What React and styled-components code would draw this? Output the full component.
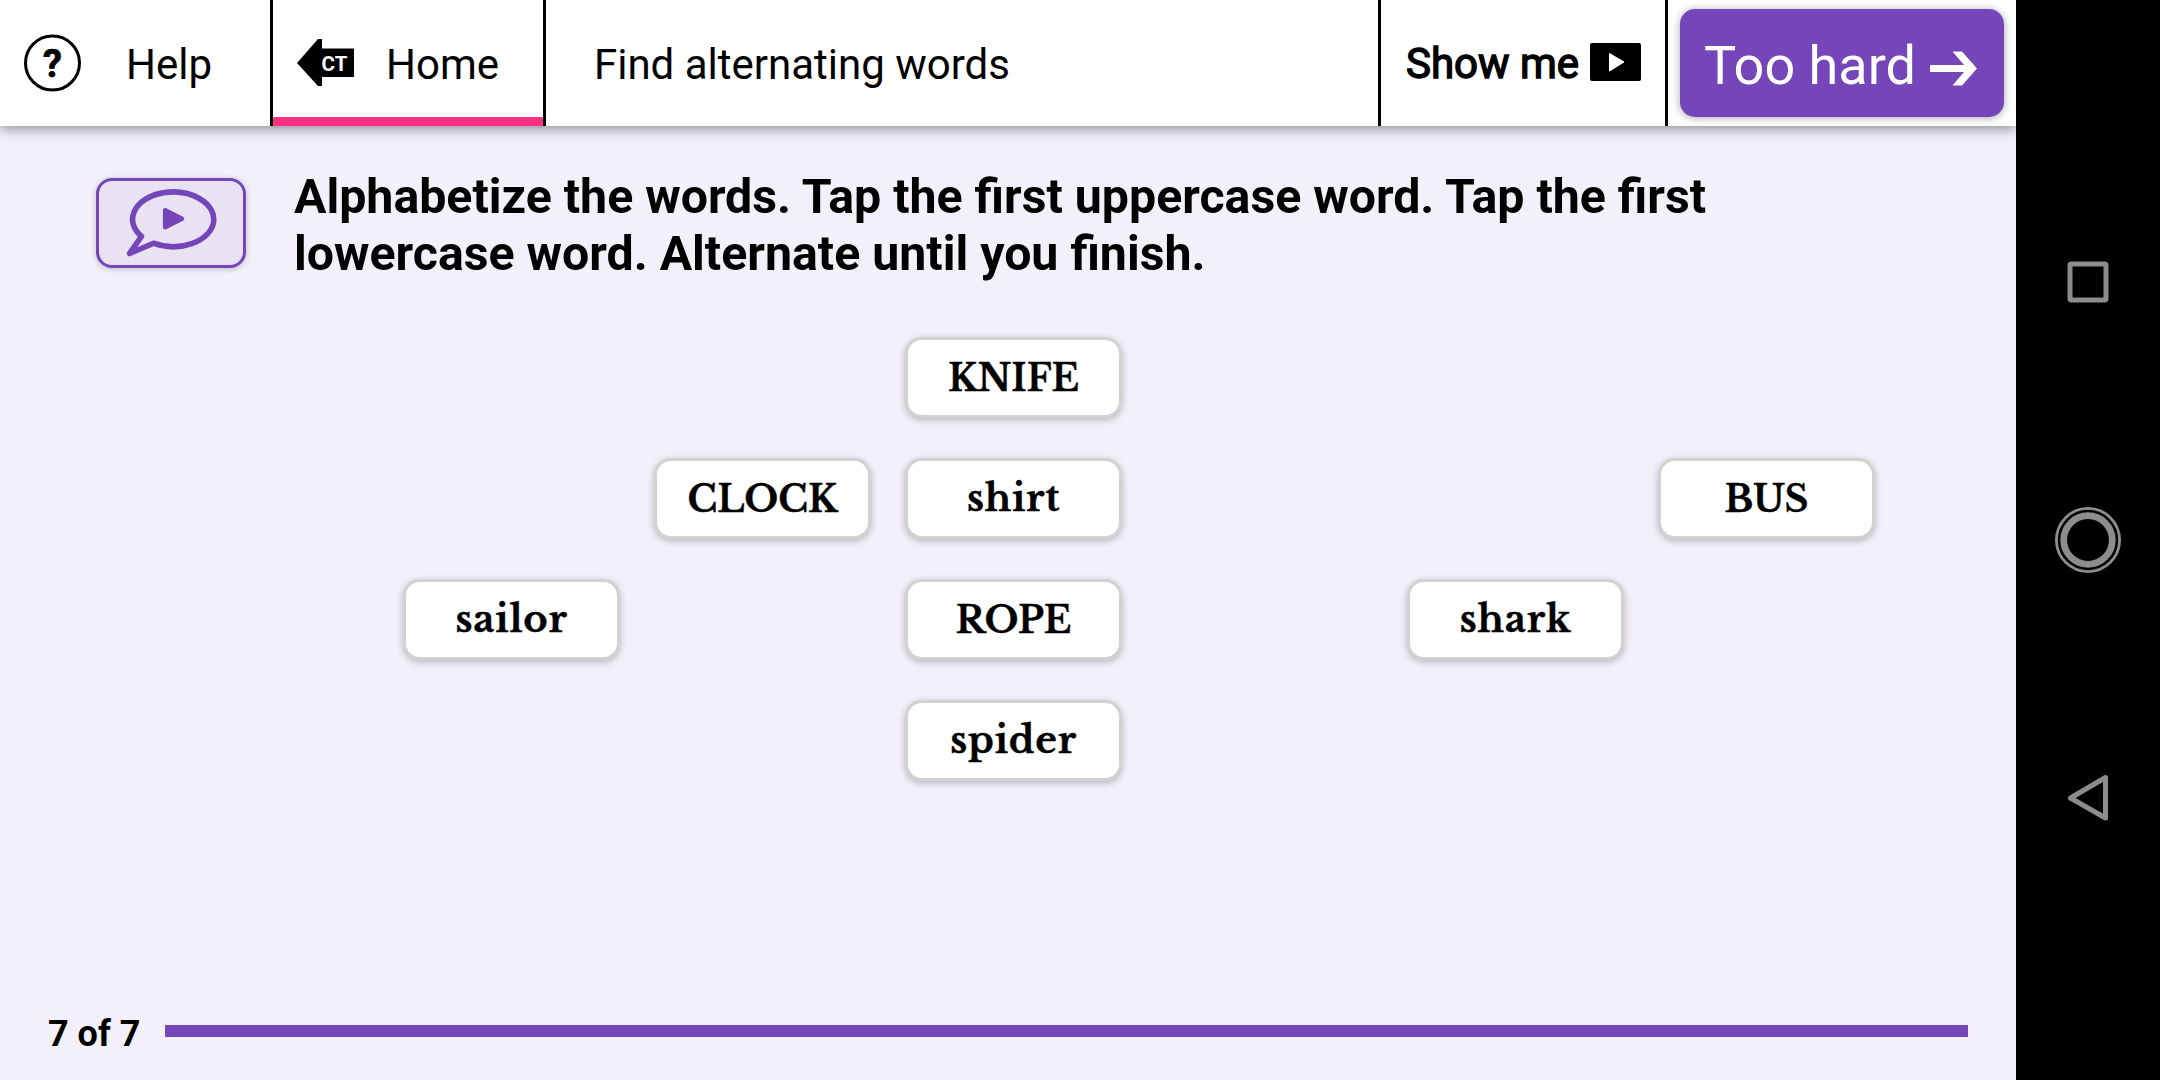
import React from 'react';
import styled, { createGlobalStyle } from 'styled-components';

const PURPLE = '#7446b9';

const GlobalStyle = createGlobalStyle`
  * { box-sizing: border-box; }
  body { margin: 0; background: #000; }
  button { margin: 0; padding: 0; border: 0; background: none; font: inherit; color: inherit; }
`;

const Screen = styled.div`
  display: flex;
  width: 2160px;
  height: 1080px;
  overflow: hidden;
  background: #000;
  color: #000;
  font-family: Roboto, "Liberation Sans", sans-serif;
`;

const AppArea = styled.div`
  display: flex;
  flex-direction: column;
  width: 2016px;
  background: #f3f0fa;
  overflow: hidden;
`;

const Header = styled.header`
  display: flex;
  flex: none;
  height: 126px;
  background: #fff;
  box-shadow: 0 3px 12px rgba(0, 0, 0, 0.42);
`;

const Tab = styled.button`
  display: flex;
  align-items: center;
  width: ${(p) => p.$width}px;
  gap: ${(p) => p.$gap}px;
  padding: 0 0 0 24px;
  border-right: 3px solid #000;
  font-size: 42px;
  line-height: 50px;
  box-shadow: ${(p) => (p.$active ? 'inset 0 -9px #ff3083' : 'none')};
  span { padding-top: 3px; }
`;

const Title = styled.h1`
  display: flex;
  align-items: center;
  flex: 1;
  margin: 0;
  padding: 2px 0 0 48px;
  font-size: 42px;
  font-weight: 400;
`;

const ShowMe = styled.button`
  display: flex;
  align-items: center;
  gap: 11px;
  width: 290px;
  padding: 0 0 2px 25px;
  border: solid #000;
  border-width: 0 3px;
  font-size: 42px;
  -webkit-text-stroke: 1.4px #000;
  span { padding-top: 3px; }
`;

const TooHard = styled.button`
  display: flex;
  align-items: center;
  gap: 14px;
  width: 324px;
  height: 108px;
  margin: 9px 12px;
  padding: 4px 0 0 24px;
  border-radius: 15px;
  background: ${PURPLE};
  box-shadow: 0 1px 8px rgba(0, 0, 0, 0.35);
  color: #fff;
  font-size: 54px;
`;

const Icon = styled.svg`
  display: block;
  flex: none;
  overflow: visible;
`;

const Lesson = styled.main`
  display: flex;
  flex-direction: column;
  flex: 1;
`;

const Instruction = styled.section`
  display: flex;
  align-items: flex-start;
  height: 211px;
  padding: 42px 0 0 96px;
`;

const SpeakButton = styled.button`
  display: flex;
  width: 150px;
  height: 90px;
  margin: 10px 48px 0 0;
  border: 3px solid ${PURPLE};
  border-radius: 16px;
  background: #e9e2f3;
  box-shadow: 0 1px 6px rgba(0, 0, 0, 0.22);
`;

const Prompt = styled.p`
  margin: 0;
  width: 1500px;
  font-size: 48.27px;
  font-weight: 700;
  line-height: 57px;
`;

const Board = styled.div`
  display: grid;
  grid-template-columns: repeat(6, 217px);
  grid-auto-rows: 81px;
  column-gap: 34px;
  row-gap: 40px;
  padding-left: 403px;
`;

const WordCard = styled.button`
  display: flex;
  align-items: center;
  justify-content: center;
  grid-column: ${(p) => p.$col};
  grid-row: ${(p) => p.$row};
  padding-top: ${(p) => (p.$upper ? 1 : 0)}px;
  padding-bottom: ${(p) => (p.$upper ? 0 : 1)}px;
  border: 3px solid #d2d2d2;
  border-radius: 17px;
  background: #fff;
  box-shadow: 0 2px 7px rgba(0, 0, 0, 0.26);
  font-family: "Libre Baskerville", "Liberation Serif", serif;
  font-size: ${(p) => (p.$upper ? 36 : 37)}px;
  font-weight: 700;
  letter-spacing: ${(p) => (p.$upper ? 0 : 0.8)}px;
  -webkit-text-stroke: 0.4px #000;
`;

const Footer = styled.footer`
  display: flex;
  align-items: center;
  gap: 25px;
  margin-top: auto;
  height: 98px;
  padding: 0 48px;
  font-size: 36px;
  font-weight: 700;
`;

const Count = styled.span`
  width: 92px;
  padding-top: 6px;
  white-space: nowrap;
`;

const Progress = styled.div`
  flex: 1;
  height: 12px;
  background: ${PURPLE};
`;

const SystemNav = styled.nav`
  display: flex;
  flex-direction: column;
  align-items: center;
  justify-content: space-between;
  width: 144px;
  padding: 249px 0;
`;

const words = [
  ['KNIFE', 3, 1],
  ['CLOCK', 2, 2],
  ['shirt', 3, 2],
  ['BUS', 6, 2],
  ['sailor', 1, 3],
  ['ROPE', 3, 3],
  ['shark', 5, 3],
  ['spider', 3, 4],
];

export default function App() {
  return (
    <Screen>
      <GlobalStyle />
      <AppArea>
        <Header>
          <Tab $width={273} $gap={45}>
            <Icon width="57" height="57" viewBox="0 0 57 57">
              <circle cx="28.5" cy="28" r="27" fill="none" stroke="#000" strokeWidth="3" />
              <text x="28.5" y="41.5" textAnchor="middle" fontSize="38" fontWeight="700" stroke="#000" strokeWidth="0.7">?</text>
            </Icon>
            <span>Help</span>
          </Tab>
          <Tab $width={273} $gap={32} $active>
            <Icon width="57" height="48" viewBox="0 0 57 48">
              <path d="M0 24 21 0H25V9.5H57V38H25V47H21Z" />
              <text x="24.5" y="31.5" fontSize="20.5" fontWeight="700" fill="#fff" textLength="26">CT</text>
            </Icon>
            <span>Home</span>
          </Tab>
          <Title>Find alternating words</Title>
          <ShowMe>
            <span>Show me</span>
            <Icon width="51" height="38" viewBox="0 0 51 38">
              <rect width="51" height="38" rx="2" />
              <path d="M19.5 10.5V28L34 19Z" fill="#fff" stroke="#fff" strokeWidth="1" strokeLinejoin="round" />
            </Icon>
          </ShowMe>
          <TooHard>
            Too hard
            <Icon width="47" height="34" viewBox="0 0 47 34">
              <path d="M0 13.5H34L22.5 0H32L47 17 32 34H22.5L34 20.5H0Z" fill="#fff" transform="translate(0 3.5)" />
            </Icon>
          </TooHard>
        </Header>
        <Lesson>
          <Instruction>
            <SpeakButton>
              <Icon width="144" height="84" viewBox="99 181 144 84">
                <path
                  d="M141.5 236.4A40.6 27.3 0 1 1 153.5 243.2L129.5 253.5Z"
                  fill="none" stroke={PURPLE} strokeWidth="5.6" strokeLinejoin="round"
                />
                <path d="M165.2 210.3V227.2L182 218.8Z" fill={PURPLE} stroke={PURPLE} strokeWidth="4.6" strokeLinejoin="round" />
              </Icon>
            </SpeakButton>
            <Prompt>
              Alphabetize the words. Tap the first uppercase word. Tap the first lowercase word. Alternate until you finish.
            </Prompt>
          </Instruction>
          <Board>
            {words.map(([word, col, row]) => (
              <WordCard key={word} $col={col} $row={row} $upper={word === word.toUpperCase()}>
                {word}
              </WordCard>
            ))}
          </Board>
          <Footer>
            <Count>7 of 7</Count>
            <Progress />
          </Footer>
        </Lesson>
      </AppArea>
      <SystemNav>
        <Icon width="66" height="66" viewBox="0 0 66 66" fill="none" stroke="#8c8c8c" strokeWidth="5">
          <rect x="15" y="15" width="36" height="36" rx="1.5" />
        </Icon>
        <Icon width="66" height="66" viewBox="0 0 66 66" fill="none" stroke="#8c8c8c">
          <circle cx="33" cy="33" r="31.6" strokeWidth="2.8" />
          <circle cx="33" cy="33" r="24.3" strokeWidth="6.7" />
        </Icon>
        <Icon width="66" height="66" viewBox="0 0 66 66" fill="none" stroke="#8c8c8c" strokeWidth="5" strokeLinejoin="round">
          <path d="M50.5 12.5V53L15.5 33Z" />
        </Icon>
      </SystemNav>
    </Screen>
  );
}
